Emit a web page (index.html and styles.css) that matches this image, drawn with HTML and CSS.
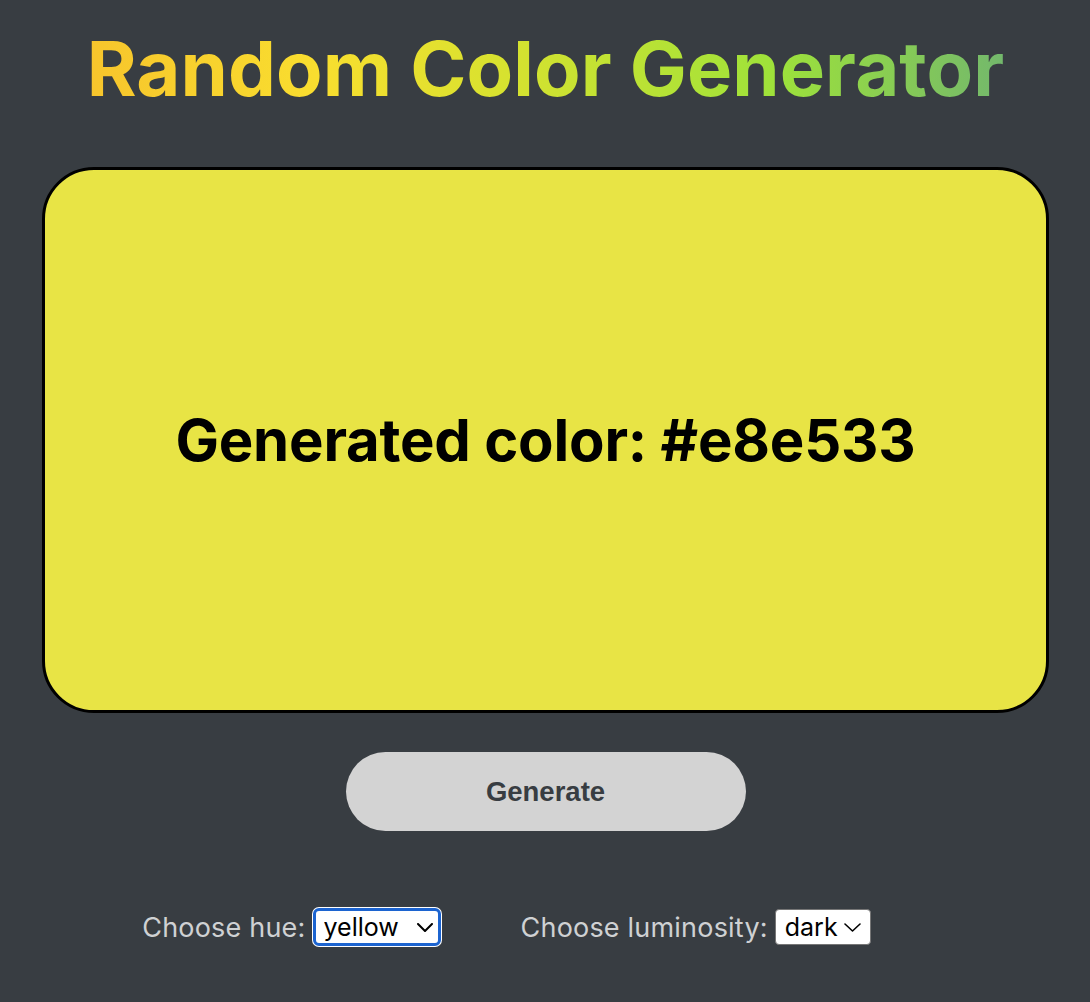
FILE: index.html
```html
<!DOCTYPE html>
<html>
<head>
<meta charset="utf-8">
<link rel="stylesheet" href="styles.css">
</head>
<body>
<main class="app">
  <h1 class="title">Random Color Generator</h1>
  <div class="swatch">
    <p class="swatch-text">Generated color: #e8e533</p>
  </div>
  <button class="generate">Generate</button>
  <div class="controls">
    <label class="control">Choose hue:
      <span class="select-wrap">
        <select class="picker picker-hue">
          <option>yellow</option>
        </select>
        <svg class="chev chev-hue" width="16" height="9" viewBox="0 0 16 9"><path d="M1 1 L8 8 L15 1" fill="none" stroke="#000" stroke-width="2" stroke-linecap="round" stroke-linejoin="round"/></svg>
      </span>
    </label>
    <label class="control">Choose luminosity:
      <span class="select-wrap">
        <select class="picker picker-lum">
          <option>dark</option>
        </select>
        <svg class="chev chev-lum" width="17" height="9" viewBox="0 0 17 9"><path d="M1 1 L8.5 8 L16 1" fill="none" stroke="#000" stroke-width="1.6" stroke-linecap="round" stroke-linejoin="round"/></svg>
      </span>
    </label>
  </div>
</main>
</body>
</html>
```
FILE: styles.css
```css
html, body {
  margin: 0;
  padding: 0;
  background: #383d42;
  height: 100%;
}
body {
  font-family: Inter, "Liberation Sans", sans-serif;
}
.app {
  display: flex;
  flex-direction: column;
  align-items: center;
  padding: 21px 41px 0 42px;
}
.title {
  margin: 0;
  font-size: 76px;
  font-weight: 700;
  line-height: 95px;
  letter-spacing: 0.1px;
  background: linear-gradient(90deg, #f7c52c 0%, #f9de2f 25%, #d8e22f 45%, #9ee23a 75%, #73b86c 100%);
  -webkit-background-clip: text;
  background-clip: text;
  color: transparent;
}
.swatch {
  margin-top: 51px;
  box-sizing: border-box;
  width: 1007px;
  height: 546px;
  border: 3px solid #000;
  border-radius: 52px;
  background: #e8e445;
  display: flex;
  align-items: center;
  justify-content: center;
}
.swatch-text {
  margin: 0;
  font-size: 58px;
  font-weight: 700;
  color: #000;
  letter-spacing: -0.2px;
}
.generate {
  margin-top: 39px;
  width: 400px;
  height: 79px;
  border: none;
  border-radius: 40px;
  background: #d3d3d3;
  color: #383d42;
  font-family: "Liberation Sans", Arial, sans-serif;
  font-weight: 700;
  font-size: 27.5px;
}
.controls {
  margin-top: 77px;
  margin-right: 78px;
  display: flex;
  gap: 80px;
  align-items: center;
}
.control {
  color: #cfd1d3;
  font-size: 27px;
  letter-spacing: 0.2px;
  display: flex;
  align-items: center;
  gap: 7px;
}
.select-wrap {
  position: relative;
  display: inline-flex;
}
.picker {
  -webkit-appearance: none;
  appearance: none;
  box-sizing: border-box;
  font-family: Inter, "Liberation Sans", sans-serif;
  font-size: 25px;
  letter-spacing: 0;
  background: #fff;
  color: #000;
  margin: 0;
}
.picker-hue {
  width: 128px;
  height: 38px;
  padding: 0 0 0 8px;
  border: 3px solid #1c64d0;
  border-radius: 6px;
  box-shadow: 0 0 0 1px #fff;
  outline: none;
}
.picker-lum {
  width: 96px;
  height: 36px;
  padding: 0 0 0 9px;
  border: 1px solid #767676;
  border-radius: 4px;
}
.chev {
  position: absolute;
  top: 50%;
  pointer-events: none;
}
.chev-hue {
  right: 8px;
  margin-top: -4px;
}
.chev-lum {
  right: 10px;
  margin-top: -4px;
}
```
